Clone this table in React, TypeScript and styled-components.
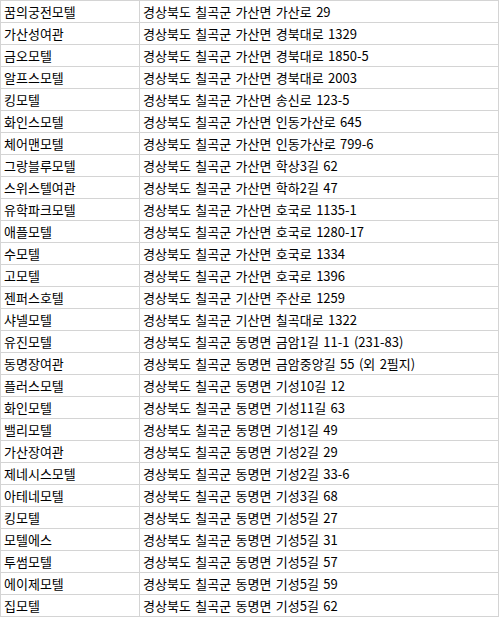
import { Fragment } from "react";
import styled, { createGlobalStyle } from "styled-components";

const GlobalStyle = createGlobalStyle`
  html, body {
    margin: 0;
    padding: 0;
    background: #fff;
  }
`

interface Lodging {
  name: string
  address: string
}

const rows: Lodging[] = [
  { name: "꿈의궁전모텔", address: "경상북도 칠곡군 가산면 가산로 29" },
  { name: "가산성여관", address: "경상북도 칠곡군 가산면 경북대로 1329" },
  { name: "금오모텔", address: "경상북도 칠곡군 가산면 경북대로 1850-5" },
  { name: "알프스모텔", address: "경상북도 칠곡군 가산면 경북대로 2003" },
  { name: "킹모텔", address: "경상북도 칠곡군 가산면 송신로 123-5" },
  { name: "화인스모텔", address: "경상북도 칠곡군 가산면 인동가산로 645" },
  { name: "체어맨모텔", address: "경상북도 칠곡군 가산면 인동가산로 799-6" },
  { name: "그랑블루모텔", address: "경상북도 칠곡군 가산면 학상3길 62" },
  { name: "스위스텔여관", address: "경상북도 칠곡군 가산면 학하2길 47" },
  { name: "유학파크모텔", address: "경상북도 칠곡군 가산면 호국로 1135-1" },
  { name: "애플모텔", address: "경상북도 칠곡군 가산면 호국로 1280-17" },
  { name: "수모텔", address: "경상북도 칠곡군 가산면 호국로 1334" },
  { name: "고모텔", address: "경상북도 칠곡군 가산면 호국로 1396" },
  { name: "젠퍼스호텔", address: "경상북도 칠곡군 기산면 주산로 1259" },
  { name: "샤넬모텔", address: "경상북도 칠곡군 기산면 칠곡대로 1322" },
  { name: "유진모텔", address: "경상북도 칠곡군 동명면 금암1길 11-1 (231-83)" },
  { name: "동명장여관", address: "경상북도 칠곡군 동명면 금암중앙길 55 (외 2필지)" },
  { name: "플러스모텔", address: "경상북도 칠곡군 동명면 기성10길 12" },
  { name: "화인모텔", address: "경상북도 칠곡군 동명면 기성11길 63" },
  { name: "밸리모텔", address: "경상북도 칠곡군 동명면 기성1길 49" },
  { name: "가산장여관", address: "경상북도 칠곡군 동명면 기성2길 29" },
  { name: "제네시스모텔", address: "경상북도 칠곡군 동명면 기성2길 33-6" },
  { name: "아테네모텔", address: "경상북도 칠곡군 동명면 기성3길 68" },
  { name: "킹모텔", address: "경상북도 칠곡군 동명면 기성5길 27" },
  { name: "모텔에스", address: "경상북도 칠곡군 동명면 기성5길 31" },
  { name: "투썸모텔", address: "경상북도 칠곡군 동명면 기성5길 57" },
  { name: "에이제모텔", address: "경상북도 칠곡군 동명면 기성5길 59" },
  { name: "집모텔", address: "경상북도 칠곡군 동명면 기성5길 62" },
]

const Sheet = styled.div`
  display: grid;
  grid-template-columns: 139px 359px;
  grid-auto-rows: 22px;
  width: 499px;
  box-sizing: border-box;
  border-top: 1px solid #d4d4d4;
  border-left: 1px solid #d4d4d4;
  font-family: "Noto Sans CJK KR", "Liberation Sans", sans-serif;
  font-size: 13px;
  word-spacing: 1.5px;
  color: #000;
`

const Cell = styled.div`
  display: flex;
  align-items: center;
  box-sizing: border-box;
  padding-left: 3px;
  border-right: 1px solid #d4d4d4;
  border-bottom: 1px solid #d4d4d4;
  white-space: nowrap;
  overflow: hidden;
  line-height: 1;
`

export default function App() {
  return (
    <>
      <GlobalStyle />
      <Sheet>
        {rows.map((r, i) => (
          <Fragment key={i}>
            <Cell>{r.name}</Cell>
            <Cell>{r.address}</Cell>
          </Fragment>
        ))}
      </Sheet>
    </>
  )
}
